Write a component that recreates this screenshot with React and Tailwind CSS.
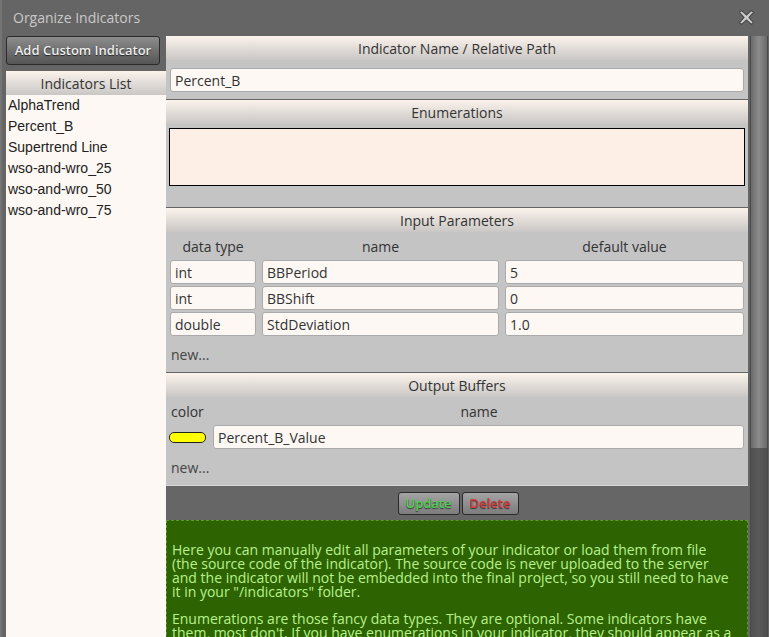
import React from "react";

const ui = { fontFamily: '"Open Sans", "Noto Sans", sans-serif' };
const arial = { fontFamily: '"Liberation Sans", Arial, sans-serif' };

function Header({ children }) {
  return (
    <div className="h-[24px] flex items-center justify-center text-[14px] text-[#333] bg-gradient-to-b from-[#fcf3ec] to-[#c9c7c5]">
      {children}
    </div>
  );
}

function Field({ value, className = "" }) {
  return (
    <div
      className={`h-[24px] flex items-center px-[4px] bg-[#fdf8f4] border border-[#aaa] rounded-[3px] text-[14px] text-[#333] ${className}`}
    >
      {value}
    </div>
  );
}

const indicators = [
  "AlphaTrend",
  "Percent_B",
  "Supertrend Line",
  "wso-and-wro_25",
  "wso-and-wro_50",
  "wso-and-wro_75",
];

const params = [
  ["int", "BBPeriod", "5"],
  ["int", "BBShift", "0"],
  ["double", "StdDeviation", "1.0"],
];

export default function App() {
  return (
    <div
      className="w-[769px] h-[637px] overflow-hidden bg-[#656565] border-l-[2px] border-[#747474] flex flex-col"
      style={ui}
    >
      <div className="h-[36px] shrink-0 flex items-center justify-between pl-[11px] pr-[14px] pb-[2px]">
        <span className="text-[14px] text-[#c9c9c9]">Organize Indicators</span>
        <svg width="17" height="17" viewBox="0 0 17 17">
          <path
            d="M3.5 1.5 L8.5 6 L13.5 1.5 L15.5 3.5 L11 8.5 L15.5 13.5 L13.5 15.5 L8.5 11 L3.5 15.5 L1.5 13.5 L6 8.5 L1.5 3.5 Z"
            fill="#cfcfcf"
            stroke="#505050"
            strokeWidth="1.2"
            strokeLinejoin="round"
          />
        </svg>
      </div>

      <div className="flex flex-1 min-h-0 pl-[4px]">
        <div className="w-[160px] shrink-0 flex flex-col">
          <button className="w-[154px] h-[29px] shrink-0 rounded-[3px] border border-[#2a2a2a] bg-gradient-to-b from-[#8d8d8d] to-[#555] text-[13px] font-semibold text-[#eee] [text-shadow:0_1px_1px_#222]">
            Add Custom Indicator
          </button>
          <div className="mt-[6px] flex-1 flex flex-col bg-[#fdf8f4]">
            <Header>Indicators List</Header>
            <div className="pl-[2px]" style={arial}>
              {indicators.map((n) => (
                <div key={n} className="h-[21px] flex items-center text-[14px] text-[#222]">
                  {n}
                </div>
              ))}
            </div>
          </div>
        </div>

        <div className="w-[582px] shrink-0 flex flex-col overflow-hidden">
          <div className="bg-[#c4c4c4]">
            <Header>Indicator Name / Relative Path</Header>
            <div className="pt-[8px] pb-[7px] px-[4px]">
              <Field value="Percent_B" />
            </div>
          </div>

          <div className="bg-[#c4c4c4] mt-[1px]">
            <Header>Enumerations</Header>
            <div className="pt-[4px] pb-[21px] px-[3px]">
              <div className="h-[58px] bg-[#fdeee6] border border-black" />
            </div>
          </div>

          <div className="bg-[#c4c4c4] mt-[1px]">
            <Header>Input Parameters</Header>
            <div className="px-[4px]">
              <div className="flex gap-[6px] h-[28px] items-center text-[14px] text-[#333]">
                <div className="w-[86px] text-center">data type</div>
                <div className="w-[237px] text-center">name</div>
                <div className="flex-1 text-center">default value</div>
              </div>
              <div className="flex flex-col gap-[2px]">
                {params.map((p) => (
                  <div key={p[1]} className="flex gap-[6px]">
                    <Field value={p[0]} className="w-[86px]" />
                    <Field value={p[1]} className="w-[237px]" />
                    <Field value={p[2]} className="flex-1" />
                  </div>
                ))}
              </div>
              <div className="h-[36px] flex items-center text-[14px] text-[#444] pl-[1px]">new...</div>
            </div>
          </div>

          <div className="bg-[#c4c4c4] mt-[1px]">
            <Header>Output Buffers</Header>
            <div className="px-[3px]">
              <div className="flex h-[28px] items-center text-[14px] text-[#333]">
                <div className="w-[44px] pl-[2px]">color</div>
                <div className="flex-1 text-center">name</div>
              </div>
              <div className="flex items-center gap-[7px]">
                <div className="w-[37px] h-[11px] rounded-[5px] bg-[#ffff00] border border-[#222]" />
                <Field value="Percent_B_Value" className="flex-1 mr-[1px]" />
              </div>
              <div className="h-[36px] flex items-center text-[14px] text-[#444] pl-[2px]">new...</div>
            </div>
          </div>

          <div className="h-[35px] shrink-0 bg-[#666] border-t border-[#d8d8d8] flex items-start justify-center gap-[2px] pt-[6px] pl-[2px]">
            <button className="w-[62px] h-[23px] rounded-[3px] border border-[#2a2a2a] bg-gradient-to-b from-[#a4a4a4] to-[#7c7c7c] text-[13px] font-semibold text-[#4fd04f] [text-shadow:0_1px_1px_#333]">
              Update
            </button>
            <button className="w-[57px] h-[23px] rounded-[3px] border border-[#2a2a2a] bg-gradient-to-b from-[#a4a4a4] to-[#7c7c7c] text-[13px] font-semibold text-[#d63a3a] [text-shadow:0_1px_1px_#333]">
              Delete
            </button>
          </div>

          <div className="flex-1 bg-[#2e6302] border border-dashed border-[#5d9a2e] pl-[5px] pr-[15px] pt-[22px] text-[14px] leading-[14px] text-[#b8f28e]">
            <p>
              Here you can manually edit all parameters of your indicator or load them from file (the source code of the indicator). The source code is never uploaded to the server and the indicator will not be embedded into the final project, so you still need to have it in your "/indicators" folder.
            </p>
            <p className="mt-[13px]">
              Enumerations are those fancy data types. They are optional. Some indicators have them, most don't. If you have enumerations in your indicator, they should appear as a list here.
            </p>
          </div>
        </div>

        <div className="w-[18px] shrink-0 ml-[2px] flex flex-col border-x border-[#4a4a4a] bg-[#555]">
          <div className="h-[412px] bg-gradient-to-r from-[#6c6c6c] via-[#8c8c8c] to-[#6a6a6a]" />
          <div className="flex-1 bg-gradient-to-r from-[#505050] via-[#5a5a5a] to-[#4e4e4e]" />
        </div>
      </div>
    </div>
  );
}
